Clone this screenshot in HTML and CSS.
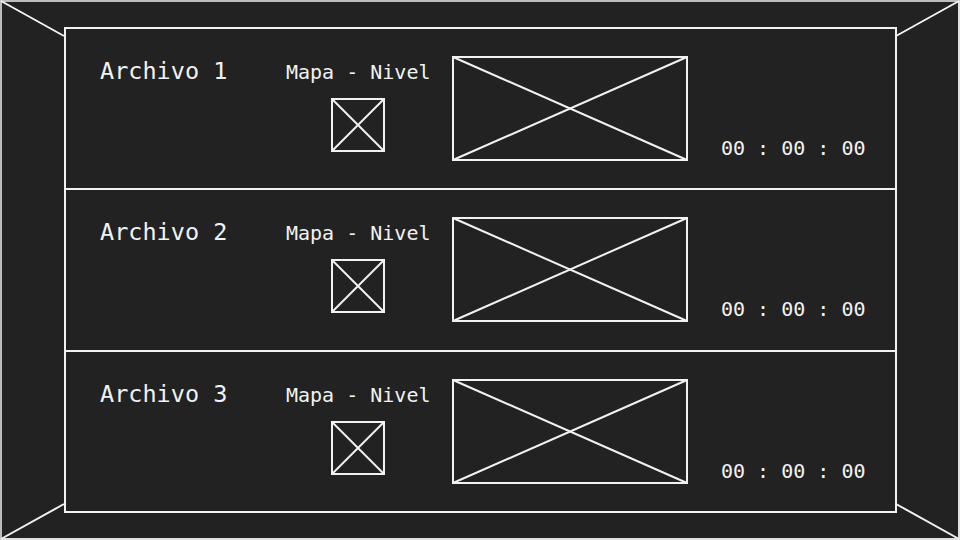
FILE: index.html
```html
<!DOCTYPE html>
<html lang="es">
<head>
  <meta charset="UTF-8" />
  <title>Cargar partida</title>
  <link rel="stylesheet" href="styles.css">
</head>
<body>
  <div class="screen">
    <!-- perspective lines from the corners -->
    <svg class="room" width="960" height="540" viewBox="0 0 960 540">
      <line x1="1" y1="1" x2="64" y2="36" />
      <line x1="959" y1="1" x2="896" y2="36" />
      <line x1="1" y1="539" x2="64" y2="504" />
      <line x1="959" y1="539" x2="896" y2="504" />
    </svg>

    <div class="panel">
      <div class="slot">
        <div class="slot-name">Archivo 1</div>
        <div class="slot-map">
          <div class="map-label">Mapa - Nivel</div>
          <svg class="ph ph-small" viewBox="0 0 54 54" preserveAspectRatio="none">
            <rect x="1" y="1" width="52" height="52" />
            <line x1="1" y1="1" x2="53" y2="53" />
            <line x1="53" y1="1" x2="1" y2="53" />
          </svg>
        </div>
        <svg class="ph ph-big" viewBox="0 0 236 105" preserveAspectRatio="none">
          <rect x="1" y="1" width="234" height="103" />
          <line x1="1" y1="1" x2="235" y2="104" />
          <line x1="235" y1="1" x2="1" y2="104" />
        </svg>
        <div class="slot-time">00 : 00 : 00</div>
      </div>

      <div class="slot">
        <div class="slot-name">Archivo 2</div>
        <div class="slot-map">
          <div class="map-label">Mapa - Nivel</div>
          <svg class="ph ph-small" viewBox="0 0 54 54" preserveAspectRatio="none">
            <rect x="1" y="1" width="52" height="52" />
            <line x1="1" y1="1" x2="53" y2="53" />
            <line x1="53" y1="1" x2="1" y2="53" />
          </svg>
        </div>
        <svg class="ph ph-big" viewBox="0 0 236 105" preserveAspectRatio="none">
          <rect x="1" y="1" width="234" height="103" />
          <line x1="1" y1="1" x2="235" y2="104" />
          <line x1="235" y1="1" x2="1" y2="104" />
        </svg>
        <div class="slot-time">00 : 00 : 00</div>
      </div>

      <div class="slot">
        <div class="slot-name">Archivo 3</div>
        <div class="slot-map">
          <div class="map-label">Mapa - Nivel</div>
          <svg class="ph ph-small" viewBox="0 0 54 54" preserveAspectRatio="none">
            <rect x="1" y="1" width="52" height="52" />
            <line x1="1" y1="1" x2="53" y2="53" />
            <line x1="53" y1="1" x2="1" y2="53" />
          </svg>
        </div>
        <svg class="ph ph-big" viewBox="0 0 236 105" preserveAspectRatio="none">
          <rect x="1" y="1" width="234" height="103" />
          <line x1="1" y1="1" x2="235" y2="104" />
          <line x1="235" y1="1" x2="1" y2="104" />
        </svg>
        <div class="slot-time">00 : 00 : 00</div>
      </div>
    </div>
  </div>
</body>
</html>
```

FILE: styles.css
```css
/* Reset */
* {
  margin: 0;
  padding: 0;
  box-sizing: border-box;
}
html, body {
  width: 960px;
  height: 540px;
  background: #222222;
  color: #f2f2f2;
  font-family: 'DejaVu Sans Mono', 'Liberation Mono', monospace;
  overflow: hidden;
}
/* Whole screen frame */
.screen {
  position: relative;
  width: 960px;
  height: 540px;
  border: 2px solid #bdbdbd;
  border-right-color: #e0e0e0;
  border-bottom-color: #e0e0e0;
  padding: 25px 0 0 62px;
}
.room {
  position: absolute;
  top: -2px;
  left: -2px;
}
.room line {
  stroke: #f2f2f2;
  stroke-width: 2;
}
/* Save slot list */
.panel {
  width: 833px;
  height: 486px;
  border: 2px solid #f2f2f2;
  display: flex;
  flex-direction: column;
}
.slot {
  flex: 1;
  display: flex;
  align-items: flex-start;
  padding: 27px 0 0 34px;
}
.slot + .slot {
  border-top: 2px solid #f2f2f2;
}
.slot-name {
  width: 186px;
  margin-top: 4px;
  font-size: 23.5px;
  line-height: 1;
}
.slot-map {
  width: 166px;
  margin-top: 6px;
  display: flex;
  flex-direction: column;
  align-items: flex-start;
}
.map-label {
  font-size: 20px;
  line-height: 20px;
  white-space: nowrap;
}
.ph {
  display: block;
  fill: none;
  stroke: #f2f2f2;
  stroke-width: 2;
}
.ph-small {
  width: 54px;
  height: 54px;
  margin: 16px 0 0 45px;
}
.ph-big {
  width: 236px;
  height: 105px;
}
.slot-time {
  margin: 82px 0 0 33px;
  font-size: 20px;
  line-height: 20px;
  white-space: pre;
}
```
